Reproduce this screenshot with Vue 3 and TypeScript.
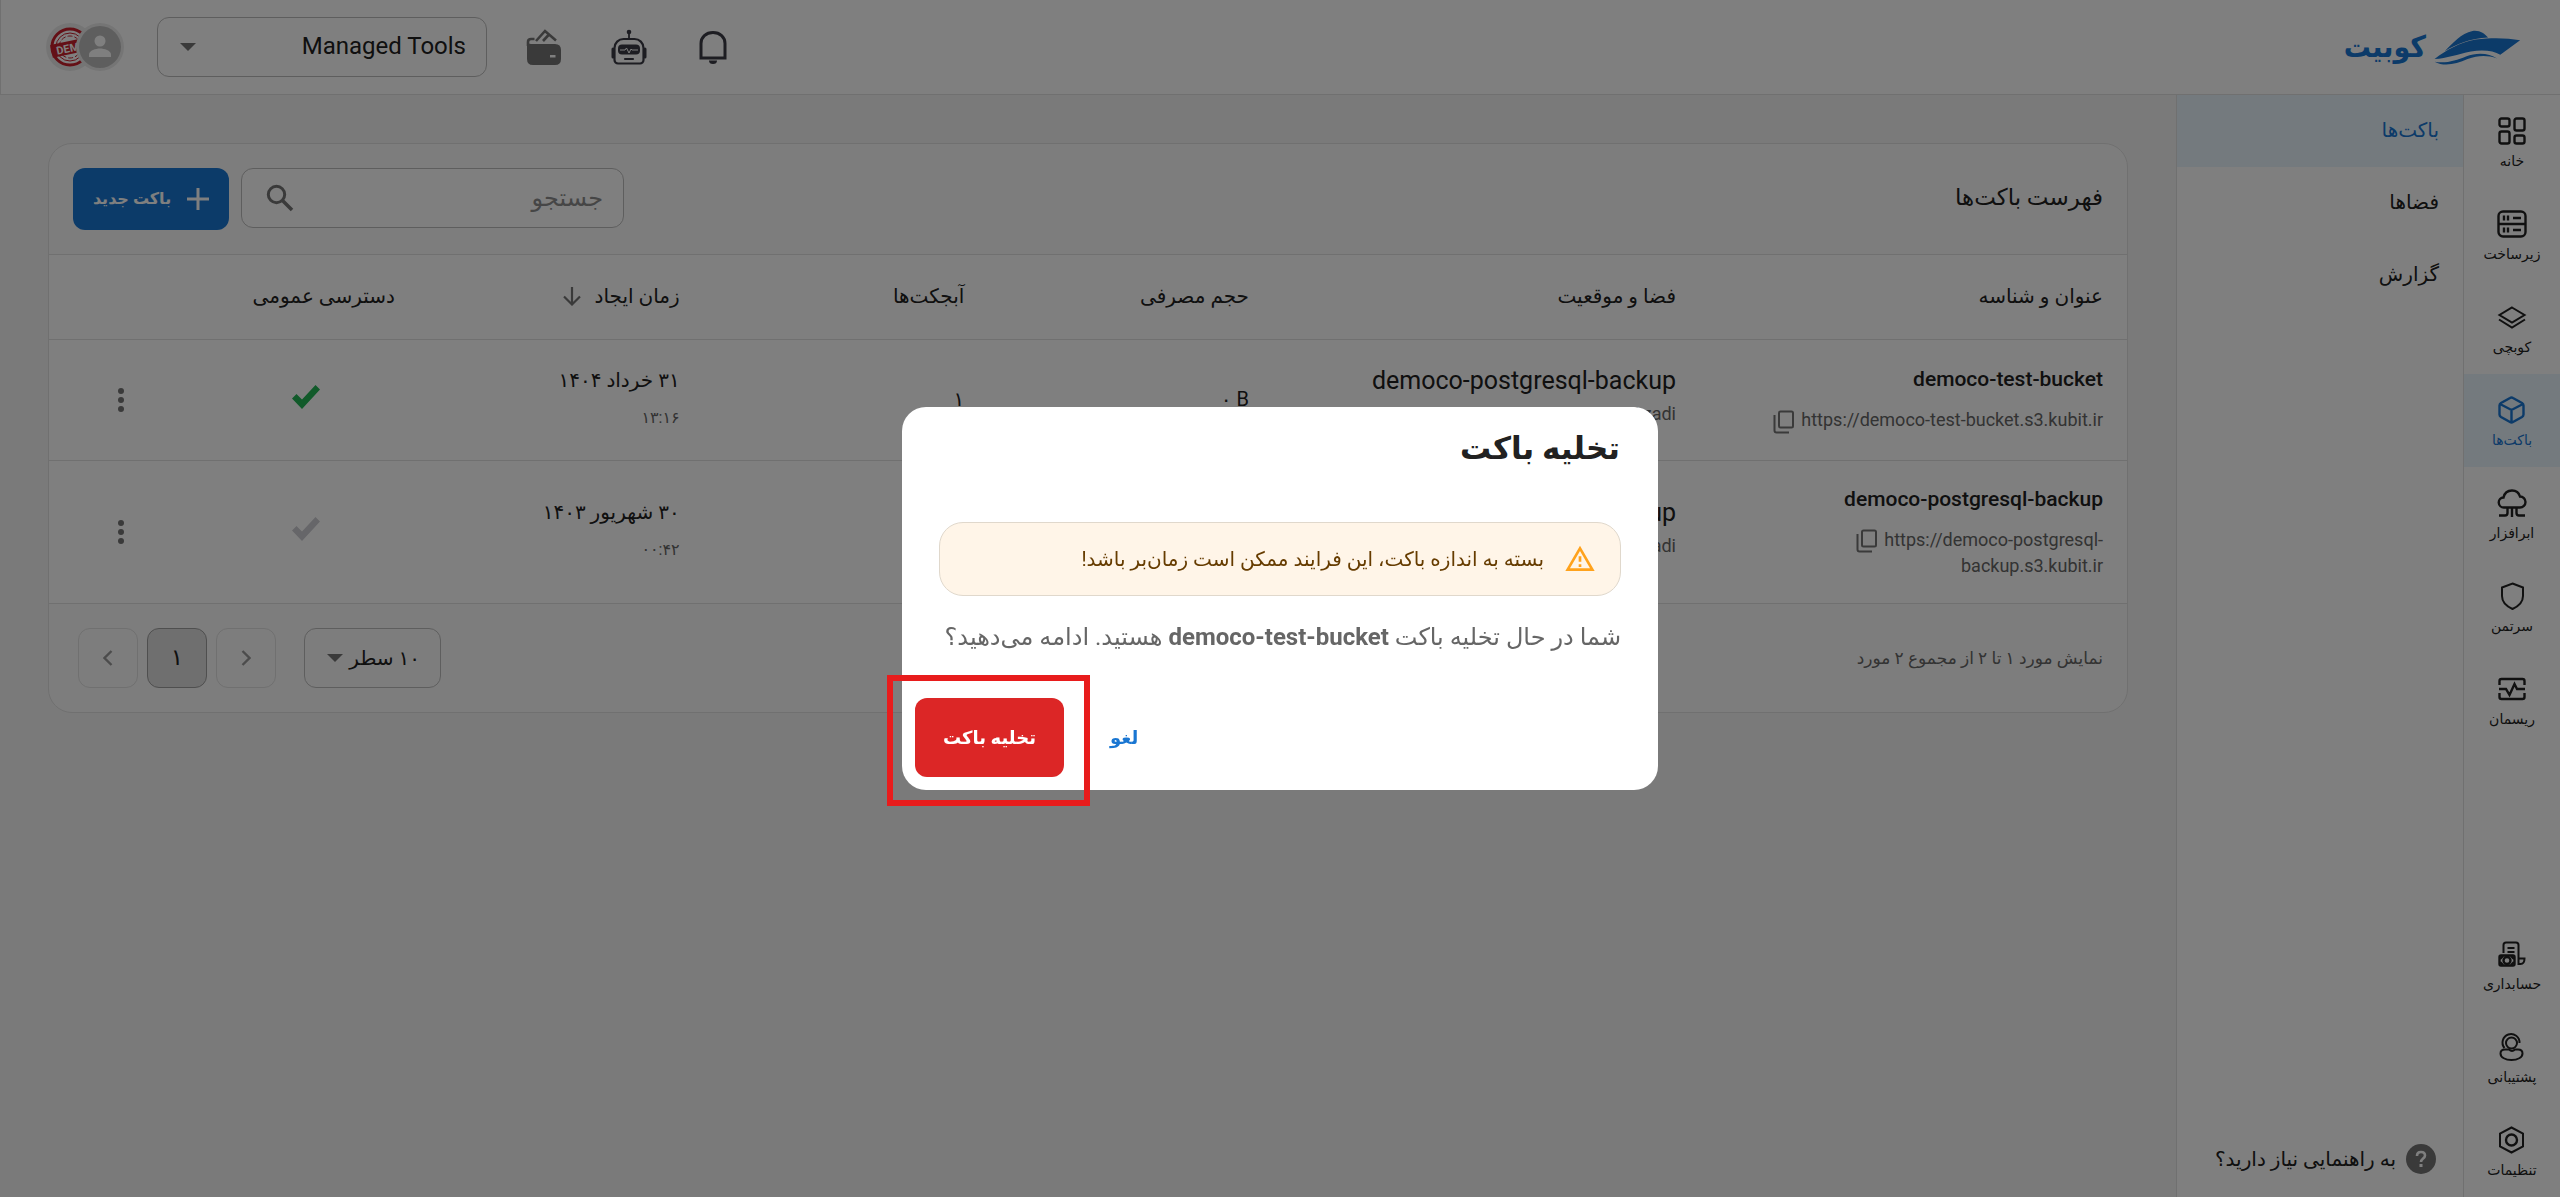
<script setup lang="ts">
import { ref } from 'vue'

interface NavItem {
  label: string
  icon: string
  active?: boolean
}

interface Bucket {
  name: string
  url: string
  space: string
  location: string
  size: string
  objects: string
  date: string
  time: string
  isPublic: boolean
}

const mainNav: NavItem[] = [
  { label: 'خانه', icon: 'home' },
  { label: 'زیرساخت', icon: 'server' },
  { label: 'کوبچی', icon: 'layers' },
  { label: 'باکت‌ها', icon: 'cube', active: true },
  { label: 'ابرافزار', icon: 'cloud' },
  { label: 'سرتمن', icon: 'shield' },
  { label: 'ریسمان', icon: 'pulse' },
]

const footNav: NavItem[] = [
  { label: 'حسابداری', icon: 'billing' },
  { label: 'پشتیبانی', icon: 'support' },
  { label: 'تنظیمات', icon: 'settings' },
]

const subNav = ['باکت‌ها', 'فضاها', 'گزارش']

const buckets: Bucket[] = [
  {
    name: 'democo-test-bucket',
    url: 'https://democo-test-bucket.s3.kubit.ir',
    space: 'democo-postgresql-backup',
    location: 'Azadi',
    size: '۰ B',
    objects: '۱',
    date: '۳۱ خرداد ۱۴۰۴',
    time: '۱۳:۱۶',
    isPublic: true,
  },
  {
    name: 'democo-postgresql-backup',
    url: 'https://democo-postgresql-backup.s3.kubit.ir',
    space: 'democo-postgresql-backup',
    location: 'Azadi',
    size: '',
    objects: '',
    date: '۳۰ شهریور ۱۴۰۳',
    time: '۰۰:۴۲',
    isPublic: false,
  },
]

const project = ref('Managed Tools')
const pageSize = ref('۱۰ سطر')
const query = ref('')
</script>

<template>
  <div class="app" dir="rtl">
    <header class="topbar">
      <a class="brand" href="#">
        <svg class="brand-mark" viewBox="825 90 260 106" aria-hidden="true">
          <path d="M856 154C880 130 905 100 940 93C962 90 976 101 987 113C935 115 890 134 856 154Z" />
          <path d="M825 178C862 150 900 128 950 119C1000 112 1045 114 1084 121L1024 165C1004 152 970 149 935 155C895 163 862 176 825 178Z" />
          <path d="M825 186C860 192 890 182 920 170C955 157 992 161 1014 176C985 166 958 166 925 178C890 193 855 202 825 186Z" />
        </svg>
        <span>کوبیت</span>
      </a>
      <div class="tools">
        <button class="icon-btn" aria-label="اعلان‌ها">
          <svg viewBox="0 0 36 36" fill="none" stroke="#3b3b45" stroke-width="3">
            <path d="M5 29V14.500C5 8 10 3.500 17 3.500S29 8 29 14.500V29Z" />
            <path d="M13 31.500h8a4 3.500 0 0 1-8 0Z" fill="#3b3b45" stroke="none" />
          </svg>
        </button>
        <button class="icon-btn" aria-label="دستیار">
          <svg viewBox="0 0 36 36" fill="none" stroke="#3b3b45">
            <circle cx="18" cy="3" r="2.300" fill="#3b3b45" stroke="none" />
            <path d="M18 4v6" stroke-width="1.800" />
            <path d="M3.500 19a9 9 0 0 1 9-9h11a9 9 0 0 1 9 9v12a3.500 3.500 0 0 1-3.500 3.500H7A3.500 3.500 0 0 1 3.500 31Z" stroke-width="2.200" />
            <rect x="7" y="15.500" width="22" height="10" rx="4" fill="#3b3b45" stroke="none" />
            <path d="M9 21h5l1.500-2 2.500 5 2-4 1 1h6" stroke="#fff" stroke-width="1" />
            <path d="M2 20v8M34 20v8" stroke-width="3" stroke-linecap="round" />
            <path d="M14 30h8" stroke-width="2.200" stroke-linecap="round" />
          </svg>
        </button>
        <button class="icon-btn" aria-label="کیف پول">
          <svg viewBox="0 0 36 36" fill="none">
            <path d="M2 17V13Q2 10 5 10h3.500M10 12l9-10 11 9.500M17 12l6-6.500" stroke="#757575" stroke-width="2.600" />
            <path d="M1 13q1 2 4 2h24q6 0 6 6v9q0 6-6 6H7q-6 0-6-6ZM24 26v2.500h5.500V26Z" fill="#757575" fill-rule="evenodd" />
          </svg>
        </button>
        <select v-model="project" class="select project" aria-label="پروژه">
          <option>Managed Tools</option>
        </select>
        <button class="avatars" aria-label="حساب کاربری">
          <svg class="avatar user" viewBox="0 0 48 48">
            <circle cx="24" cy="24" r="24" fill="#ebebeb" />
            <circle cx="24" cy="24" r="21" fill="#bdbdbd" />
            <circle cx="24" cy="18" r="5.500" fill="#fff" />
            <path d="M13 34v-2.500c0-4 7-6 11-6s11 2 11 6V34Z" fill="#fff" />
          </svg>
          <svg class="avatar org" viewBox="0 0 48 48">
            <circle cx="24" cy="24" r="24" fill="#ebebeb" />
            <circle cx="24" cy="24" r="18" fill="#fff" stroke="#c9202c" stroke-width="3" />
            <circle cx="24" cy="24" r="14" fill="none" stroke="#c9202c" stroke-width="1" />
            <circle cx="24" cy="24" r="11" fill="none" stroke="#c9202c" stroke-width="1" stroke-dasharray="5 2" />
            <g transform="rotate(-12 24 24)">
              <rect x="5" y="18" width="38" height="13" fill="#c9202c" />
              <text x="10" y="29" fill="#fff" font-size="11" font-weight="700" direction="ltr">DEM</text>
            </g>
          </svg>
        </button>
      </div>
    </header>

    <div class="shell">
      <nav class="rail">
        <template v-for="(group, g) in [mainNav, footNav]" :key="g">
          <div class="rail-group">
            <a v-for="item in group" :key="item.icon" href="#" class="rail-item" :class="{ active: item.active }">
              <svg viewBox="0 0 32 32" fill="none" stroke="currentColor" stroke-width="2.400">
                <template v-if="item.icon === 'home'">
                  <rect x="3.500" y="3.500" width="10" height="8" rx="2" />
                  <rect x="18.500" y="3.500" width="10" height="12" rx="2" />
                  <rect x="3.500" y="16.500" width="10" height="12" rx="2" />
                  <rect x="18.500" y="20.500" width="10" height="8" rx="2" />
                </template>
                <template v-else-if="item.icon === 'server'">
                  <rect x="2.500" y="3.500" width="27" height="25" rx="4.500" />
                  <path d="M3 16h26M8 7.500v5M12 7.500v5M8 19.500v5M12 19.500v5M17 10h8M17 22h8" />
                </template>
                <template v-else-if="item.icon === 'layers'">
                  <path d="M16 6.500 28.500 14 16 21.500 3.500 14ZM3 18.500l13 8 13-8" stroke-width="2" />
                </template>
                <template v-else-if="item.icon === 'cube'">
                  <path d="M14 4q1.500-1 3 0l9 5q1.500 1 1.500 2.500v9q0 1.500-1.500 2.500l-9 5q-1.500 1-3 0L5 23q-1.500-1-1.500-2.500v-9Q3.500 10 5 9ZM4 10l11.500 6L27 10M15.500 16v12" />
                </template>
                <template v-else-if="item.icon === 'cloud'">
                  <path d="M8 20.500a5 5 0 0 1-.5-10C8.500 6 12 3.500 16 3.500s7 2.500 8 6a5.500 5.500 0 0 1 0 11ZM11.500 21v5q0 2.500-2.500 2.500H3M16 21v9M20.500 21v5q0 2.500 2.500 2.500h6" />
                </template>
                <template v-else-if="item.icon === 'shield'">
                  <path d="M16.500 3.500 27 7.500V16c0 6-4 10-10.500 13C10 26 6 22 6 16V7.500Z" stroke-width="2" />
                </template>
                <template v-else-if="item.icon === 'pulse'">
                  <path d="M3.500 12V8q0-2 2-2h21q2 0 2 2v4M3.500 20v4q0 2 2 2h21q2 0 2-2v-4M3 16h7l3.500 6 5-11 2.500 5h8" />
                </template>
                <template v-else-if="item.icon === 'billing'">
                  <path d="M7.500 15V7q0-2.500 2.500-2.500h10q2.500 0 2.500 2.500v19h2q4 0 4-5.500h-5M11.500 10h7M11.500 14h7" stroke-width="2" />
                  <rect x="3.500" y="17.500" width="15" height="10" rx="1.500" />
                  <circle cx="11" cy="22.500" r="3.500" />
                  <path d="M4 21l3-3M4 24l3 3M18 21l-3-3M18 24l-3 3" />
                </template>
                <template v-else-if="item.icon === 'support'">
                  <path d="M8.500 17a8.500 8.500 0 1 1 15-5" stroke-width="2" />
                  <circle cx="15.500" cy="12" r="5.500" stroke-width="2" />
                  <path d="M12 18.500H9q-4.500 0-4.500 4c0 4 5 6.500 11 6.500s11-2.500 11-6.500q0-4-4.500-4h-3q-3 3-6 0Z" stroke-width="2" />
                </template>
                <template v-else>
                  <path d="M15.500 3.500 27 9.500v13l-11.500 6L4 22.500v-13Z" stroke-width="2" />
                  <circle cx="15.500" cy="16" r="5.500" />
                </template>
              </svg>
              <span>{{ item.label }}</span>
            </a>
          </div>
        </template>
      </nav>

      <aside class="subnav">
        <a v-for="(label, i) in subNav" :key="label" href="#" :class="{ active: i === 0 }">{{ label }}</a>
        <button class="help">
          <svg viewBox="0 0 30 30" aria-hidden="true">
            <circle cx="15" cy="15" r="15" fill="#757575" />
            <path d="M11 12q0-4 4-4t4 3.500c0 3-4 3-4 6.500" fill="none" stroke="#fff" stroke-width="2.600" />
            <rect x="13.500" y="20" width="3" height="3" fill="#fff" />
          </svg>
          <span>به راهنمایی نیاز دارید؟</span>
        </button>
      </aside>

      <main class="content">
        <section class="card">
          <div class="card-head">
            <h1>فهرست باکت‌ها</h1>
            <div class="actions">
              <label class="search">
                <input v-model="query" type="text" placeholder="جستجو" aria-label="جستجو" />
                <svg viewBox="0 0 28 28" fill="none" stroke="#757575" stroke-width="3">
                  <circle cx="10.500" cy="10.500" r="8.200" />
                  <path d="m16.500 16.500 9.500 9.500" stroke-width="3.500" />
                </svg>
              </label>
              <button class="primary">
                <svg viewBox="0 0 22 22" stroke="#fff" stroke-width="3"><path d="M11 0v22M0 11h22" /></svg>
                <span>باکت جدید</span>
              </button>
            </div>
          </div>

          <table>
            <colgroup>
              <col class="c-wide" /><col class="c-wide" /><col class="c-mid" /><col class="c-mid" />
              <col class="c-mid" /><col class="c-access" /><col class="c-menu" />
            </colgroup>
            <thead>
              <tr>
                <th scope="col">عنوان و شناسه</th>
                <th scope="col">فضا و موقعیت</th>
                <th scope="col">حجم مصرفی</th>
                <th scope="col">آبجکت‌ها</th>
                <th scope="col">
                  <span class="sort">
                    زمان ایجاد
                    <svg viewBox="0 0 20 20" fill="none" stroke="#757575" stroke-width="2.200"><path d="M10 1v17M2 10.500l8 8 8-8" /></svg>
                  </span>
                </th>
                <th scope="col">دسترسی عمومی</th>
                <th></th>
              </tr>
            </thead>
            <tbody>
              <tr v-for="b in buckets" :key="b.name">
                <td>
                  <div class="name">{{ b.name }}</div>
                  <div class="url" dir="ltr">
                    <button class="copy" aria-label="کپی">
                      <svg viewBox="0 0 22 24" fill="none" stroke="#757575" stroke-width="2"><rect x="6" y="1.500" width="14" height="16" rx="1.500" /><path d="M1.500 5v15.500q0 2 2 2H16" /></svg>
                    </button>
                    <span>{{ b.url }}</span>
                  </div>
                </td>
                <td>
                  <div class="space" dir="ltr">{{ b.space }}</div>
                  <div class="place" dir="ltr">{{ b.location }}</div>
                </td>
                <td><span dir="ltr">{{ b.size }}</span></td>
                <td>{{ b.objects }}</td>
                <td>
                  <div>{{ b.date }}</div>
                  <div class="time">{{ b.time }}</div>
                </td>
                <td class="center access">
                  <svg class="check" :class="{ on: b.isPublic }" viewBox="0 0 28 24"><path d="M0 13.500 4.500 9 10 14.500 23.500 0 28 4.500 10 24Z" /></svg>
                </td>
                <td class="center">
                  <button class="more" aria-label="گزینه‌ها">
                    <svg viewBox="0 0 6 26"><circle cx="3" cy="4" r="3" /><circle cx="3" cy="13" r="3" /><circle cx="3" cy="22" r="3" /></svg>
                  </button>
                </td>
              </tr>
            </tbody>
          </table>

          <div class="card-foot">
            <p>نمایش مورد ۱ تا ۲ از مجموع ۲ مورد</p>
            <div class="pager">
              <select v-model="pageSize" class="select size" aria-label="تعداد سطر">
                <option>۱۰ سطر</option>
              </select>
              <button class="page off" disabled aria-label="قبلی">
                <svg viewBox="0 0 10 16" fill="none" stroke="currentColor" stroke-width="2.400"><path d="m1.500 1 7 7-7 7" /></svg>
              </button>
              <button class="page current">۱</button>
              <button class="page off" disabled aria-label="بعدی">
                <svg viewBox="0 0 10 16" fill="none" stroke="currentColor" stroke-width="2.400"><path d="m8.500 1-7 7 7 7" /></svg>
              </button>
            </div>
          </div>
        </section>
      </main>
    </div>

    <div class="backdrop">
      <div class="dialog" role="dialog" aria-modal="true" aria-labelledby="dialog-title">
        <h2 id="dialog-title">تخلیه باکت</h2>
        <div class="dialog-body">
          <div class="alert" role="alert">
            <svg viewBox="0 0 24 24" fill="#ffa21c"><path d="M12 5.990 19.530 19H4.470L12 5.990M12 2 1 21h22L12 2zm1 14h-2v2h2v-2zm0-6h-2v4h2v-4z" /></svg>
            <span>بسته به اندازه باکت، این فرایند ممکن است زمان‌بر باشد!</span>
          </div>
          <p class="question">شما در حال تخلیه باکت <strong>democo-test-bucket</strong> هستید. ادامه می‌دهید؟</p>
        </div>
        <div class="dialog-actions">
          <button class="cancel">لغو</button>
          <div class="marked">
            <button class="danger">تخلیه باکت</button>
          </div>
        </div>
      </div>
    </div>
  </div>
</template>

<style>
body {
  margin: 0;
}
</style>

<style scoped>
* {
  box-sizing: border-box;
}

.app {
  --line: #e0e0e0;
  --blue: #1976d2;
  --ink: #212121;
  --muted: #666;
  display: flex;
  flex-direction: column;
  min-height: 100vh;
  background: #f5f5f5;
  color: var(--ink);
  font-family: Roboto, 'DejaVu Sans', sans-serif;
  font-size: 20px;
  line-height: 28px;
}

button,
input,
select {
  font: inherit;
  color: inherit;
}

button {
  border: 0;
  padding: 0;
  background: none;
}

a {
  color: inherit;
  text-decoration: none;
}

h1,
h2,
p {
  margin: 0;
}

svg {
  display: block;
  flex: none;
}

/* top bar */
.topbar {
  display: flex;
  align-items: center;
  justify-content: space-between;
  height: 95px;
  padding: 0 39px 0 45px;
  background: #fff;
  border-bottom: 1px solid var(--line);
  border-left: 1px solid var(--line);
}

.brand {
  display: flex;
  align-items: center;
  gap: 8px;
  color: var(--blue);
  font-family: 'DejaVu Sans Condensed', 'DejaVu Sans', sans-serif;
  font-size: 30px;
  font-weight: 700;
}

.brand-mark {
  width: 87px;
  height: 35px;
  fill: currentColor;
}

.tools {
  display: flex;
  align-items: center;
}

.icon-btn {
  margin-left: 49px;
}

.icon-btn svg {
  width: 36px;
  height: 36px;
}

.select {
  appearance: none;
  height: 60px;
  border: 1px solid #bdbdbd;
  border-radius: 12px;
  background: url("data:image/svg+xml,%3Csvg xmlns='http://www.w3.org/2000/svg' width='16' height='8'%3E%3Cpath d='M0 0h16L8 8Z' fill='%23757575'/%3E%3C/svg%3E") no-repeat left 22px center;
}

.project {
  width: 330px;
  margin-left: 33px;
  margin-right: -10px;
  padding: 0 20px 2px 50px;
  font-size: 24px;
}

.avatars {
  display: flex;
}

.avatar {
  width: 48px;
  height: 48px;
}

.user {
  position: relative;
  z-index: 1;
}

.org {
  margin-right: -18px;
}

/* navigation */
.shell {
  display: flex;
  flex: 1;
}

.rail {
  display: flex;
  flex-direction: column;
  justify-content: space-between;
  width: 97px;
  background: #fff;
  border-left: 1px solid var(--line);
}

.rail-item {
  display: flex;
  flex-direction: column;
  align-items: center;
  gap: 4px;
  height: 93px;
  padding-top: 20px;
  font-size: 14px;
  line-height: 20px;
}

.rail-item svg {
  width: 32px;
  height: 32px;
}

.active {
  background: #e9f4fc;
  color: var(--blue);
}

.subnav {
  display: flex;
  flex-direction: column;
  width: 287px;
  background: #fff;
  border-left: 1px solid var(--line);
}

.subnav a {
  height: 72px;
  padding: 21px 24px 0;
}

.help {
  display: flex;
  align-items: center;
  gap: 10px;
  margin: auto 27px 23px 0;
}

.help svg {
  width: 30px;
  height: 30px;
}

/* card */
.content {
  flex: 1;
  min-width: 0;
  padding: 48px;
}

.card {
  background: #fbfbfb;
  border: 1px solid var(--line);
  border-radius: 24px;
}

.card-head {
  display: flex;
  align-items: center;
  justify-content: space-between;
  height: 111px;
  padding: 0 24px;
  border-bottom: 1px solid var(--line);
}

h1 {
  padding-bottom: 2px;
  font-size: 23px;
  font-weight: 500;
}

.actions {
  display: flex;
  gap: 12px;
}

.search {
  display: flex;
  align-items: center;
  width: 383px;
  height: 60px;
  padding: 0 20px 0 24px;
  background: #fff;
  border: 1px solid #bdbdbd;
  border-radius: 12px;
}

.search input {
  flex: 1;
  min-width: 0;
  border: 0;
  outline: 0;
  padding: 0;
  background: none;
  font-size: 24px;
}

.search input::placeholder {
  color: #8c8c8c;
  opacity: 1;
}

.search svg {
  width: 28px;
  height: 28px;
}

.primary {
  display: flex;
  align-items: center;
  justify-content: center;
  gap: 16px;
  width: 156px;
  height: 62px;
  border-radius: 12px;
  background: var(--blue);
  color: #fff;
  font-size: 16px;
  font-weight: 700;
}

.primary svg {
  width: 22px;
  height: 22px;
}

/* table */
table {
  width: 100%;
  table-layout: fixed;
  border-collapse: collapse;
  background: #fff;
}

.c-wide {
  width: 20.55%;
}

.c-mid {
  width: 13.7%;
}

.c-menu {
  width: 6.9%;
}

th {
  height: 84px;
  padding: 0 24px 2px;
  border-bottom: 1px solid var(--line);
  font-weight: 400;
  text-align: right;
}

td {
  height: 121px;
  padding: 22px 24px 24px;
  border-bottom: 1px solid var(--line);
  text-align: right;
}

.sort {
  display: flex;
  align-items: center;
  gap: 12px;
}

.sort svg {
  width: 20px;
  height: 20px;
}

.name {
  font-size: 21px;
  line-height: 32px;
  font-weight: 500;
}

.url {
  margin-top: 12px;
  color: var(--muted);
  font-size: 18px;
  line-height: 26px;
  text-align: right;
}

.copy {
  display: inline-block;
  height: 24px;
  margin-right: 6px;
  vertical-align: middle;
}

.copy svg {
  width: 22px;
  height: 24px;
}

.space {
  font-size: 25px;
  line-height: 34px;
  text-align: right;
}

.place {
  padding-bottom: 4px;
  font-size: 18px;
  line-height: 32px;
  text-align: right;
  color: var(--muted);
}

.time {
  margin-top: 10px;
  font-size: 16px;
  color: var(--muted);
}

td.center {
  padding: 0;
}

td.access {
  padding-bottom: 6px;
}

.center svg,
.center button {
  margin: 0 auto;
}

.more {
  display: block;
}

.check {
  width: 28px;
  height: 24px;
  fill: #ccccd2;
}

.check.on {
  fill: #22b455;
}

.more svg {
  width: 6px;
  height: 26px;
  fill: #757575;
}

.card-foot {
  display: flex;
  align-items: center;
  justify-content: space-between;
  height: 108px;
  padding: 0 24px 0 29px;
}

.card-foot p {
  font-size: 17px;
  color: var(--muted);
}

.pager {
  display: flex;
  gap: 9px;
}

.size {
  width: 137px;
  margin-left: 19px;
  padding: 0 20px 0 40px;
}

.page {
  display: grid;
  place-items: center;
  width: 60px;
  height: 60px;
  border: 1px solid #9e9e9e;
  border-radius: 12px;
  font-size: 23px;
}

.page.current {
  background: #dedede;
}

.page.off {
  border-color: var(--line);
  color: #999;
}

.page svg {
  width: 10px;
  height: 16px;
}

/* dialog */
.backdrop {
  position: fixed;
  inset: 0;
  z-index: 10;
  display: flex;
  align-items: center;
  justify-content: center;
  background: rgba(0, 0, 0, 0.5);
}

.dialog {
  display: flex;
  flex-direction: column;
  width: 756px;
  background: #fff;
  border-radius: 24px;
}

h2 {
  padding: 18px 38px 0;
  font-size: 31px;
  line-height: 48px;
  font-weight: 700;
}

.dialog-body {
  padding: 49px 37px 0;
}

.alert {
  display: flex;
  align-items: center;
  gap: 20px;
  height: 74px;
  padding: 0 24px;
  background: #fff5e8;
  border: 1px solid #e0d8cc;
  border-radius: 24px;
  color: #663c00;
}

.alert svg {
  width: 32px;
  height: 32px;
}

.question {
  margin-top: 23px;
  color: var(--muted);
  font-size: 24px;
  line-height: 36px;
  white-space: nowrap;
}

.dialog-actions {
  display: flex;
  align-items: center;
  justify-content: flex-end;
  padding: 43px 13px 13px;
  font-size: 18px;
}

.cancel {
  padding: 0 20px;
  margin-left: 26px;
  color: var(--blue);
  font-weight: 700;
}

.marked {
  position: relative;
}

.marked::after {
  content: '';
  position: absolute;
  inset: -23px -26px -29px -28px;
  border: 6px solid #e81c1c;
  pointer-events: none;
}

.danger {
  display: block;
  width: 149px;
  height: 79px;
  border-radius: 12px;
  background: #dc2626;
  color: #fff;
  font-weight: 700;
}
</style>
